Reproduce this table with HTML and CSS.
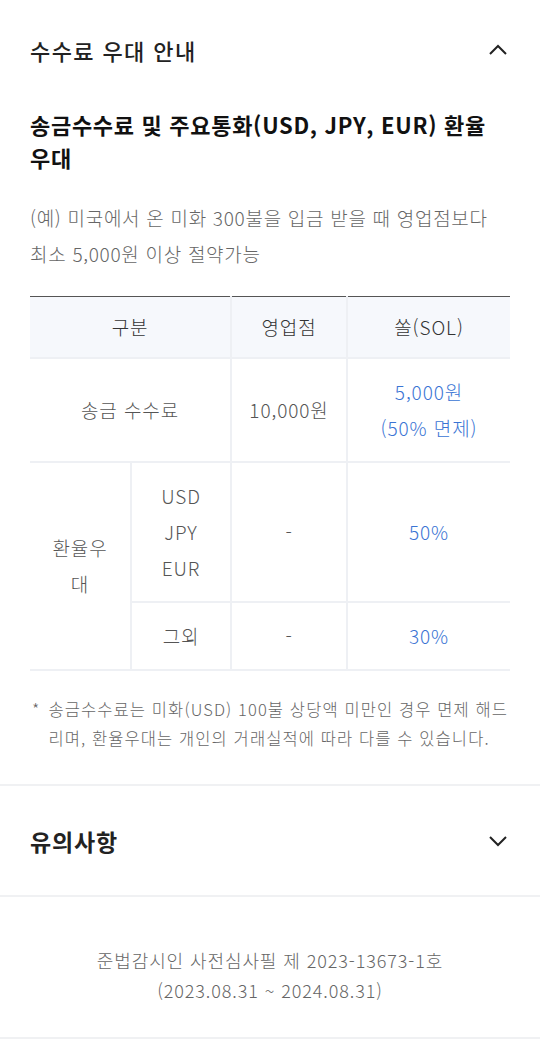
FILE: index.html
```html
<!DOCTYPE html>
<html lang="ko">
<head>
<meta charset="utf-8">
<link rel="stylesheet" href="styles.css">
</head>
<body>
<section class="acc acc-open">
  <div class="acc-head">
    <h2 class="acc-title">수수료 우대 안내</h2>
    <svg class="chev" width="20" height="12" viewBox="0 0 20 12"><path d="M2 10 L10 2 L18 10" fill="none" stroke="#222" stroke-width="2"/></svg>
  </div>
  <div class="acc-body">
    <h3 class="sub">송금수수료 및 주요통화(USD, JPY, EUR) 환율 우대</h3>
    <p class="desc">(예) 미국에서 온 미화 300불을 입금 받을 때 영업점보다 최소 5,000원 이상 절약가능</p>
    <table class="tbl">
      <colgroup><col class="c1"><col class="c2"><col class="c3"><col class="c4"></colgroup>
      <thead>
        <tr><th colspan="2">구분</th><th>영업점</th><th>쏠(SOL)</th></tr>
      </thead>
      <tbody>
        <tr><td colspan="2">송금 수수료</td><td>10,000원</td><td class="blue">5,000원<br>(50% 면제)</td></tr>
        <tr><td rowspan="2" class="grp"><span class="grp-txt">환율우대</span></td><td>USD<br>JPY<br>EUR</td><td>-</td><td class="blue">50%</td></tr>
        <tr><td>그외</td><td>-</td><td class="blue">30%</td></tr>
      </tbody>
    </table>
    <div class="note"><span class="star">*</span><span>송금수수료는 미화(USD) 100불 상당액 미만인 경우 면제 해드리며, 환율우대는 개인의 거래실적에 따라 다를 수 있습니다.</span></div>
  </div>
</section>
<section class="acc acc-closed">
  <div class="acc-head">
    <h2 class="acc-title bold">유의사항</h2>
    <svg class="chev" width="20" height="12" viewBox="0 0 20 12"><path d="M2 2 L10 10 L18 2" fill="none" stroke="#222" stroke-width="2"/></svg>
  </div>
</section>
<footer class="foot">
  <p>준법감시인 사전심사필 제 2023-13673-1호<br>(2023.08.31 ~ 2024.08.31)</p>
</footer>
</body>
</html>
```
FILE: styles.css
```css
* { box-sizing: border-box; }
html, body { margin: 0; padding: 0; background: #fff; }
body {
  font-family: "Noto Sans CJK KR", "Noto Sans", sans-serif;
  color: #222;
  width: 540px;
}
.acc { border-bottom: 2px solid #f0f1f3; }
.acc-head {
  display: flex;
  align-items: center;
  justify-content: space-between;
  padding: 0 32px 0 30px;
}
.acc-open .acc-head { align-items: flex-start; padding-top: 35px; }
.acc-title {
  margin: 0;
  font-size: 22px;
  line-height: 30px;
  letter-spacing: 1.4px;
  font-weight: 500;
  color: #222;
}
.acc-title.bold { font-weight: 700; font-size: 23px; letter-spacing: 0.8px; }
.acc-open .chev { margin-top: 9px; }
.acc-closed .acc-head { height: 109px; }
.acc-body { padding: 0 30px 31px; }
.sub {
  margin: 43px 0 0;
  font-size: 22px;
  line-height: 33px;
  letter-spacing: 0.7px;
  font-weight: 700;
  color: #111;
  word-break: keep-all;
}
.desc {
  margin: 26px 0 0;
  font-size: 19px;
  line-height: 36px;
  letter-spacing: 0.7px;
  color: #666;
  font-weight: 300;
}
.tbl {
  width: 100%;
  margin-top: 24px;
  border-collapse: collapse;
  table-layout: fixed;
  border-top: 1px solid #555;
  font-size: 19px;
  letter-spacing: 0.9px;
  color: #555;
}
.c1 { width: 101px; }
.c2 { width: 100px; }
.c3 { width: 116px; }
.c4 { width: 163px; }
.tbl th, .tbl td {
  text-align: center;
  vertical-align: middle;
  line-height: 36px;
  font-weight: 300;
  border: 2px solid #eef0f4;
}
.tbl tr > :first-child { border-left: none; }
.tbl tr > :last-child { border-right: none; }
.tbl th {
  background: #f6f8fc;
  color: #333;
  padding: 12px 0;
  border-top: none;
}
.tbl td { padding: 15px 0; }
.tbl td.grp { border-left: none; padding: 0 18px; }
.tbl tbody tr:nth-child(3) td:first-child { border-left: 2px solid #eef0f4; }
.blue { color: #3a74d4; }
.note {
  display: flex;
  gap: 8px;
  margin-top: 24px;
  font-size: 16.5px;
  line-height: 29px;
  letter-spacing: 1.1px;
  color: #666;
  font-weight: 300;
}
.star { flex: none; padding-left: 2px; }
.foot {
  padding: 48px 30px 32px;
  text-align: center;
  border-bottom: 2px solid #f0f1f3;
}
.foot p {
  margin: 0;
  font-size: 18px;
  line-height: 30px;
  letter-spacing: 0.9px;
  color: #666;
  font-weight: 300;
}
```
